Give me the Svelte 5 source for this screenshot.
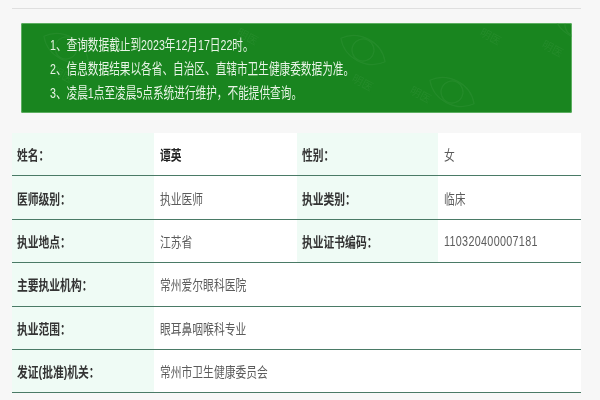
<script>
	const notices = [
		'1、查询数据截止到2023年12月17日22时。',
		'2、信息数据结果以各省、自治区、直辖市卫生健康委数据为准。',
		'3、凌晨1点至凌晨5点系统进行维护，不能提供查询。'
	];

	const rows = [
		[{ label: '姓名：', value: '谭英', strong: true }, { label: '性别：', value: '女' }],
		[{ label: '医师级别：', value: '执业医师' }, { label: '执业类别：', value: '临床' }],
		[{ label: '执业地点：', value: '江苏省' }, { label: '执业证书编码：', value: '110320400007181', code: true }],
		[{ label: '主要执业机构：', value: '常州爱尔眼科医院' }],
		[{ label: '执业范围：', value: '眼耳鼻咽喉科专业' }],
		[{ label: '发证(批准)机关：', value: '常州市卫生健康委员会' }]
	];

	const eyes = [
		{ x: 20, y: 5 },
		{ x: 317, y: 7 },
		{ x: 406, y: 49 },
		{ x: 530, y: -18 }
	];
	const marks = [
		{ x: 30, y: 50 },
		{ x: 215, y: 12 },
		{ x: 330, y: 58 },
		{ x: 388, y: 70 },
		{ x: 458, y: 12 },
		{ x: 520, y: 24 }
	];
</script>

<div class="page">
	<div class="rule"></div>

	<div class="notice">
		<svg class="marks" width="551" height="90" viewBox="0 0 551 90" aria-hidden="true">
			{#each eyes as eye}
				<g transform="translate({eye.x} {eye.y}) rotate(28 25 20)">
					<path d="M0 20C12 4 38 4 50 20C38 36 12 36 0 20Z" />
					<circle cx="25" cy="20" r="11" />
				</g>
			{/each}
			{#each marks as mark}
				<text x={mark.x} y={mark.y} transform="rotate(28 {mark.x} {mark.y})">明医</text>
			{/each}
		</svg>
		{#each notices as line}
			<p>{line}</p>
		{/each}
	</div>

	<div class="table">
		{#each rows as row}
			<div class="row">
				{#each row as cell}
					<div class="label"><span>{cell.label}</span></div>
					<div class="value" class:strong={cell.strong} class:code={cell.code} class:wide={row.length === 1}><span>{cell.value}</span></div>
				{/each}
			</div>
		{/each}
	</div>
</div>

<style>
	:global(body) {
		background: #f7f7f7;
	}

	.page {
		height: 400px;
		overflow: hidden;
		padding: 8px 19px 0 12px;
		font-family: "Liberation Sans", "Noto Sans CJK SC", sans-serif;
		filter: blur(0.35px);
	}

	.rule {
		height: 1px;
		background: #dfdfdf;
		margin-bottom: 14px;
	}

	.notice {
		position: relative;
		box-sizing: border-box;
		height: 90px;
		margin: 0 9px 20px;
		padding: 10px 0 0 29px;
		background: #19851f;
		border-radius: 2px;
		box-shadow: 0 0 0 1px #5cae60 inset;
		color: #e8f4e6;
		font-size: 15px;
		line-height: 24px;
		overflow: hidden;
	}

	.notice p {
		position: relative;
		margin: 0;
		transform: scaleX(0.71);
		transform-origin: left;
		white-space: nowrap;
	}

	.marks {
		position: absolute;
		inset: 0;
		fill: none;
		stroke: #3f9a44;
		stroke-width: 1.2;
		opacity: 0.3;
	}

	.marks text {
		fill: #3f9a44;
		stroke: none;
		font-size: 11px;
	}

	.table {
		display: flex;
		flex-direction: column;
	}

	.row {
		display: grid;
		grid-template-columns: 142px 143px 141px 143px;
		box-sizing: border-box;
		height: 43.4px;
		border-bottom: 1px solid #4a7a66;
		font-size: 14px;
	}

	.label,
	.value {
		display: flex;
		align-items: center;
		padding-left: 5px;
		white-space: nowrap;
	}

	.label {
		background: #effbf5;
		color: #333;
		font-weight: 700;
	}

	.value {
		background: #fff;
		color: #5c5c5c;
		padding-left: 6px;
	}

	.value.wide {
		grid-column: span 3;
	}

	.value.strong {
		color: #222;
		font-weight: 700;
	}

	.value.code {
		letter-spacing: 0.4px;
	}

	.label span,
	.value span {
		transform: scaleX(0.77);
		transform-origin: left;
	}
</style>
